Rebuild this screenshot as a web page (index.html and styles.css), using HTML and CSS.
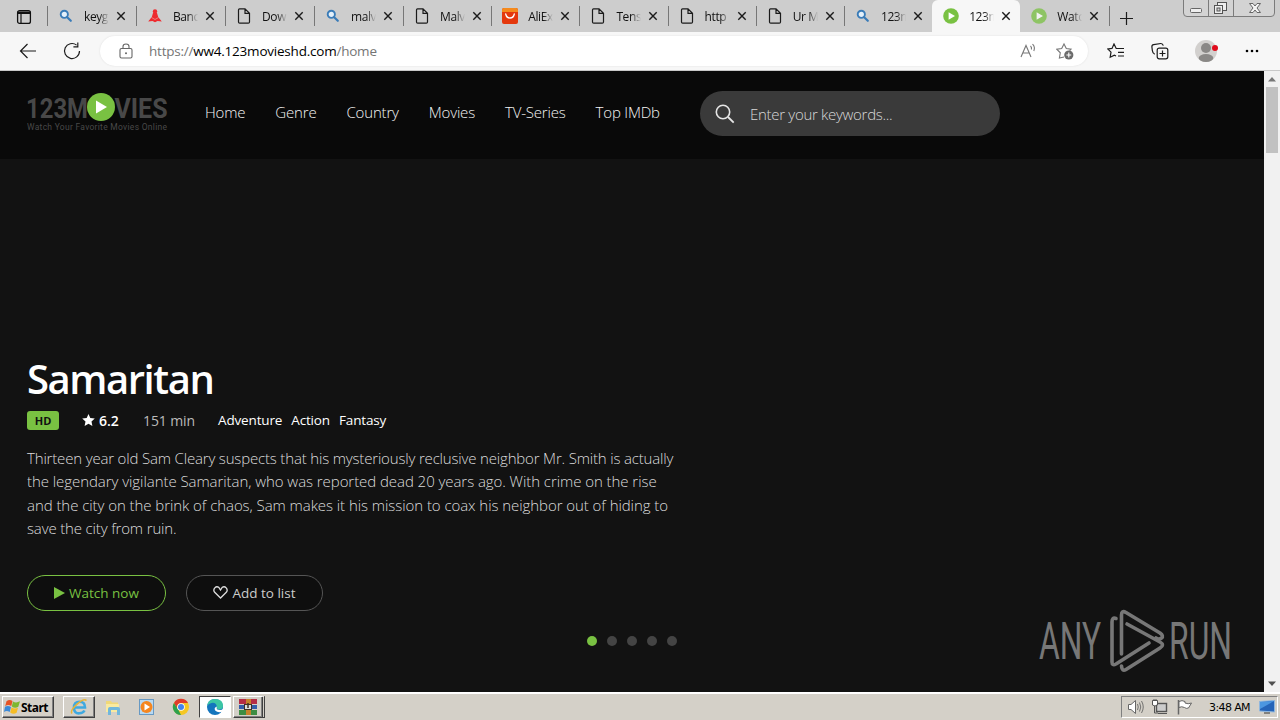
FILE: index.html
```html
<!DOCTYPE html>
<html lang="en">
<head>
    <meta charset="UTF-8">
    <meta name="viewport" content="width=device-width, initial-scale=1.0">
    <title>123movies</title>
    <link rel="stylesheet" href="styles.css">
</head>
<body>

<!-- shared icons -->
<svg width="0" height="0" class="defs">
    <symbol id="search" viewBox="0 0 16 16"><circle cx="6.3" cy="6.3" r="3.6" fill="#e4f0fa" stroke="#3a7cb8" stroke-width="1.9"/><path d="M9.2 9.2L12.8 12.8" stroke="#3a7cb8" stroke-width="2.2" stroke-linecap="round"/></symbol>
    <symbol id="page" viewBox="0 0 16 16"><path d="M3.5 .8H9L13.5 5.3V14Q13.5 15.2 12.3 15.2H3.7Q2.5 15.2 2.5 14V2Q2.5 .8 3.5 .8ZM9 .8V5.3H13.5" fill="none" stroke="#1b1b1b" stroke-width="1.2"/></symbol>
    <symbol id="play" viewBox="0 0 16 16"><circle cx="8" cy="8" r="7.8" fill="#79c142"/><path d="M5.6 4.2L12 8L5.6 11.8Z" fill="#fff"/></symbol>
    <symbol id="close" viewBox="0 0 10 10"><path d="M1.3 1.3L8.7 8.7M8.7 1.3L1.3 8.7" stroke="#1b1b1b" stroke-width="1.4"/></symbol>
</svg>

<div class="tabbar">
    <div class="tab-actions">
        <svg width="16" height="16" viewBox="0 0 16 16"><rect x="1.6" y="1.6" width="12.8" height="12.8" rx="2" fill="none" stroke="#111" stroke-width="1.3"/><path d="M1.5 2.5H14.5V5H1.5Z" fill="#111"/><path d="M5 4V14.5" stroke="#111" stroke-width="1.2"/></svg>
    </div>
    <div class="tabs">
        <div class="tab"><svg class="fav"><use href="#search"/></svg><span>keyg</span><svg class="x"><use href="#close"/></svg></div>
        <div class="tab"><svg class="fav" viewBox="0 0 16 16"><circle cx="8" cy="3.4" r="2.2" fill="#ee2a2e"/><path d="M6 5H10L11.2 9L14.8 13.6L10.5 13L8 14.2L5.5 13L1.2 13.6L4.8 9Z" fill="#ee2a2e"/><path d="M4.5 9.5L8 11.5L11.5 9.5" fill="none" stroke="#e9a0a0" stroke-width=".7"/></svg><span>Banc</span><svg class="x"><use href="#close"/></svg></div>
        <div class="tab"><svg class="fav"><use href="#page"/></svg><span>Dow</span><svg class="x"><use href="#close"/></svg></div>
        <div class="tab"><svg class="fav"><use href="#search"/></svg><span>malv</span><svg class="x"><use href="#close"/></svg></div>
        <div class="tab"><svg class="fav"><use href="#page"/></svg><span>Malv</span><svg class="x"><use href="#close"/></svg></div>
        <div class="tab"><svg class="fav" viewBox="0 0 16 16"><rect width="16" height="16" rx="2" fill="#e4380c"/><path d="M0 4V2Q0 0 2 0H14Q16 0 16 2V4Z" fill="#f58a1c"/><path d="M3.7 6Q4.5 10 8 10T12.3 6" fill="none" stroke="#fff" stroke-width="1.3" stroke-linecap="round"/></svg><span>AliEx</span><svg class="x"><use href="#close"/></svg></div>
        <div class="tab"><svg class="fav"><use href="#page"/></svg><span>Tens</span><svg class="x"><use href="#close"/></svg></div>
        <div class="tab"><svg class="fav"><use href="#page"/></svg><span>http</span><svg class="x"><use href="#close"/></svg></div>
        <div class="tab"><svg class="fav"><use href="#page"/></svg><span>Ur M</span><svg class="x"><use href="#close"/></svg></div>
        <div class="tab"><svg class="fav"><use href="#search"/></svg><span>123m</span><svg class="x"><use href="#close"/></svg></div>
        <div class="tab active"><svg class="fav"><use href="#play"/></svg><span>123m</span><svg class="x"><use href="#close"/></svg></div>
        <div class="tab after"><svg class="fav pale"><use href="#play"/></svg><span>Watc</span><svg class="x"><use href="#close"/></svg></div>
    </div>
    <div class="new-tab">
        <svg width="14" height="14" viewBox="0 0 14 14"><path d="M6.5 0V13M0 6.5H13" stroke="#1b1b1b" stroke-width="1.2"/></svg>
    </div>
    <div class="window-buttons">
        <svg width="92" height="17" viewBox="0 0 92 17"><path d="M.5 0V13Q.5 16.5 4 16.5H88Q91.5 16.5 91.5 13V0M25.5 0V16M50.5 0V16" fill="#d3d3d3" stroke="#7b7b7b"/><rect x="7.5" y="8.5" width="11" height="4" rx="1" fill="#eee" stroke="#666"/><rect x="34.5" y="2.5" width="9" height="8" fill="#eee" stroke="#555"/><rect x="31.5" y="5.5" width="8" height="8" fill="#eee" stroke="#555"/><rect x="34" y="8" width="3" height="3" fill="#d3d3d3" stroke="#555"/><path d="M66.5 3.5H70L72 6L74 3.5H77.5L74 8L77.5 12.5H74L72 10L70 12.5H66.5L70 8Z" fill="#f4f4f4" stroke="#666"/></svg>
    </div>
</div>

<div class="toolbar">
    <svg class="back" width="18" height="16" viewBox="0 0 18 16"><path d="M8.5 1L1.5 8L8.5 15M1.5 8H17" fill="none" stroke="#1b1b1b" stroke-width="1.2"/></svg>
    <svg class="reload" width="18" height="18" viewBox="0 0 18 18"><path d="M16.5 9A7.5 7.5 0 1 1 13.6 3.1M14.8 .5V4.9H10.4" fill="none" stroke="#1b1b1b" stroke-width="1.2"/></svg>
    <div class="address">
        <svg width="14" height="16" viewBox="0 0 14 16"><rect x="1" y="5.5" width="12" height="9.5" rx="1.5" fill="none" stroke="#666" stroke-width="1.1"/><path d="M4 5.5V3.5Q4 1 7 1T10 3.5V5.5" fill="none" stroke="#666" stroke-width="1.1"/><circle cx="7" cy="10.2" r="1" fill="#666"/></svg>
        <div class="url"><span class="scheme">https://</span><b>ww4.123movieshd.com</b><span class="path">/home</span></div>
        <svg class="read" width="17" height="16" viewBox="0 0 17 16"><path d="M1 14L6 2.5L11 14M2.8 10H9.2M10.5 3Q12 4.5 11.4 6.5M12.5 1.2Q15.5 4 13.8 8" fill="none" stroke="#777" stroke-width="1.1"/></svg>
        <svg width="18" height="18" viewBox="0 0 18 18"><path d="M8 15L3.4 16L4.3 10.8L.8 7.2L5.7 6.5L8 2L10.3 6.5L15 7.2L13.6 8.6" fill="none" stroke="#777" stroke-width="1.1"/><circle cx="12.8" cy="13" r="4.6" fill="#6b6b6b"/><path d="M12.8 10.6V15.4M10.4 13H15.2" stroke="#fff" stroke-width="1.1"/></svg>
    </div>
    <div class="tools">
        <svg width="18" height="16" viewBox="0 0 18 16"><path d="M9.6 5.5H17M11 9.3H17M11 13H17M10.8 5.5H9.2L7 1L5 5.4L.8 6L4 9.2L3.2 14.2L7.3 12.1L9 13" fill="none" stroke="#1b1b1b" stroke-width="1.2"/></svg>
        <svg width="18" height="18" viewBox="0 0 18 18"><rect x="6.2" y="6.2" width="10.6" height="10.6" rx="2" fill="none" stroke="#1b1b1b" stroke-width="1.2"/><path d="M11.5 8.5V14.5M8.5 11.5H14.5M3.8 12.2Q1.6 11.4 1.4 8.8L.9 5Q.7 3 2.6 2.7L9.8 1.5Q11.7 1.4 12.3 3.7" fill="none" stroke="#1b1b1b" stroke-width="1.2"/></svg>
        <svg width="24" height="22" viewBox="0 0 24 22"><circle cx="11" cy="11" r="11" fill="#d2d0ce"/><circle cx="11" cy="8" r="5" fill="#8a8886"/><ellipse cx="11" cy="18" rx="7.3" ry="4" fill="#8a8886"/><circle cx="20" cy="8" r="3" fill="#e00b1c"/></svg>
        <svg width="14" height="4" viewBox="0 0 14 4"><circle cx="2" cy="2" r="1.3"/><circle cx="7" cy="2" r="1.3"/><circle cx="12" cy="2" r="1.3"/></svg>
    </div>
</div>

<div class="viewport">
    <div class="site">
        <header class="header">
            <svg class="logo" width="142" height="42" viewBox="0 0 142 42">
                <text x="-1" y="25.5" textLength="62" lengthAdjust="spacingAndGlyphs" class="logo-name">123M</text>
                <text x="87.5" y="25.5" textLength="53" lengthAdjust="spacingAndGlyphs" class="logo-name">VIES</text>
                <circle cx="74" cy="15" r="14" fill="#79c142"/>
                <path d="M69 8.5L80 15L69 21.5Z" fill="#fff"/>
                <text x="0" y="38" textLength="140" class="logo-slogan">Watch Your Favorite Movies Online</text>
            </svg>
            <nav class="menu">
                <a>Home</a>
                <a>Genre</a>
                <a>Country</a>
                <a>Movies</a>
                <a>TV-Series</a>
                <a>Top IMDb</a>
            </nav>
            <div class="search">
                <svg width="20" height="20" viewBox="0 0 20 20"><circle cx="8" cy="8" r="6.7" fill="none" stroke="#e6e6e6" stroke-width="1.6"/><path d="M13 13L18.7 18.7" stroke="#e6e6e6" stroke-width="1.8"/></svg>
                <span>Enter your keywords...</span>
            </div>
        </header>

        <section class="hero">
            <h1>Samaritan</h1>
            <div class="meta">
                <span class="quality">HD</span>
                <span class="rating"><svg width="13" height="12" viewBox="0 0 13 12"><path d="M6.5 0L8.3 4L12.8 4.5L9.5 7.4L10.4 12L6.5 9.7L2.6 12L3.5 7.4L.2 4.5L4.7 4Z" fill="#fff"/></svg>6.2</span>
                <span class="time">151 min</span>
                <span class="genres"><a>Adventure</a><a>Action</a><a>Fantasy</a></span>
            </div>
            <p class="desc">
                <span class="l1">Thirteen year old Sam Cleary suspects that his mysteriously reclusive neighbor Mr. Smith is actually</span>
                <span class="l2">the legendary vigilante Samaritan, who was reported dead 20 years ago. With crime on the rise</span>
                <span class="l3">and the city on the brink of chaos, Sam makes it his mission to coax his neighbor out of hiding to</span>
                <span class="l4">save the city from ruin.</span>
            </p>
            <div class="buttons">
                <a class="btn watch"><svg width="11" height="12" viewBox="0 0 11 12"><path d="M0 0L11 6L0 12Z" fill="#79c142"/></svg>Watch now</a>
                <a class="btn add"><svg width="15" height="13" viewBox="0 0 15 13"><path d="M7.5 12L1.7 6.3C-.7 3.3 3 -.9 6 1.6L7.5 4L9 1.6C12 -.9 15.7 3.3 13.3 6.3Z" fill="none" stroke="#ddd" stroke-width="1.3"/></svg>Add to list</a>
            </div>
            <div class="dots"><i class="on"></i><i></i><i></i><i></i><i></i></div>
        </section>

        <svg class="watermark" width="194" height="64" viewBox="0 0 194 64">
            <text x="1" y="50" textLength="62" lengthAdjust="spacingAndGlyphs">ANY</text>
            <text x="131" y="50" textLength="63" lengthAdjust="spacingAndGlyphs">RUN</text>
            <g fill="none" stroke="#777" stroke-width="3.6" stroke-linejoin="round" stroke-linecap="round">
                <path d="M78 9.5Q74 8 74 13V53Q74 57 78 55L111 34"/>
                <path d="M83.500 45V6Q83.500 1 88 3.500L122 24Q126 27 123.500 29Q121 31 118 29"/>
                <path d="M83.500 57Q84 63 88 60.500L122 39Q127 36 122 33L89 15"/>
            </g>
        </svg>
    </div>
    <div class="scrollbar">
        <svg width="16" height="16" viewBox="0 0 16 16"><path d="M4 10.5L8 6L12 10.5Z" fill="#777"/></svg>
        <div class="thumb"></div>
        <svg width="16" height="16" viewBox="0 0 16 16"><path d="M4 5.5L8 10L12 5.5Z" fill="#505050"/></svg>
    </div>
</div>

<div class="taskbar">
    <div class="start">
        <svg width="16" height="16" viewBox="0 0 16 16"><path d="M2.500 2.300Q5.500 -.3 8.500 2L7.300 7Q4 5 1.200 7.200Z" fill="#e65325"/><path d="M9 2.500Q12 4.500 16 2.300L14.300 7.800Q11 10 7.800 7.500Z" fill="#7db72f"/><path d="M1 7.800Q4 6 7 8L5.700 13Q2.600 10.800 0 13Z" fill="#3c8ad8"/><path d="M7.600 8.300Q10.500 10.500 14 8.700L12.600 13.700Q9.500 16 6.200 13.500Z" fill="#f6bd25"/></svg>Start
    </div>
    <div class="task raised">
        <svg width="18" height="18" viewBox="0 0 18 18"><path d="M4.5 9.5H15Q15 3.7 9.5 3.7T4 9.7T9.5 15.3Q13 15.3 14.5 12.5" fill="none" stroke="#3fa9e0" stroke-width="2.6"/><path d="M2 15.5C-1 12 13 -1 16.5 2.5" fill="none" stroke="#e8b437" stroke-width="1.5"/></svg>
    </div>
    <div class="task">
        <svg width="18" height="18" viewBox="0 0 18 18"><path d="M2 3H7L8 4.5H14V8H2Z" fill="#f0d878"/><path d="M2 6H15V14H2Z" fill="#f9eaa0"/><path d="M4 17V11Q4 9 6 9H14Q16 9 16 11V17H13V12H7V17Z" fill="#71b7dc"/></svg>
    </div>
    <div class="task">
        <svg width="18" height="18" viewBox="0 0 18 18"><rect x="1.5" y="1.5" width="14" height="15" fill="#b8d9f2" stroke="#6799c3"/><circle cx="8.5" cy="9" r="6" fill="#f5861f"/><path d="M6.5 5.5L12 9L6.5 12.5Z" fill="#fff"/></svg>
    </div>
    <div class="task">
        <svg width="18" height="18" viewBox="0 0 18 18"><circle cx="9" cy="9" r="8" fill="#f5c722"/><path d="M2 5A8 8 0 0 1 16 5H9A4 4 0 0 0 5.5 11Z" fill="#df3b2c"/><path d="M1.9 5L6.5 12L9 17A8 8 0 0 1 1.9 5Z" fill="#2da04d"/><circle cx="9" cy="9" r="3.8" fill="#fff"/><circle cx="9" cy="9" r="3" fill="#4283ee"/></svg>
    </div>
    <div class="task pressed">
        <svg width="18" height="18" viewBox="0 0 18 18"><circle cx="9" cy="9" r="8" fill="#1475bd"/><path d="M1.200 8Q2 1 9 1Q17 1 17 8Q17 11.500 12.500 11.500Q10.500 11.300 11 9Q10 4 5.500 5Q2.500 5.700 1.200 8Z" fill="#3cc6a4"/><path d="M11 8.500Q9.500 12 14 12Q16 12 17 11V13.500Q12 15.500 9.200 12.500Q7.500 9.500 11 8.500Z" fill="#fff"/></svg>
    </div>
    <div class="task raised rar">
        <svg width="18" height="18" viewBox="0 0 18 18"><path d="M0 1H18V6H0Z" fill="#b52c45"/><path d="M0 7H18V11H0Z" fill="#345daa"/><path d="M0 12H18V17H0Z" fill="#3d8d43"/><path d="M7 1H12V17H7Z" fill="#c7822b"/><rect x="5.5" y="6.5" width="7" height="5" fill="#ddd" stroke="#403023"/><path d="M9 5V10" stroke="#403023" stroke-width="1.5"/></svg>
    </div>
    <div class="tray">
        <svg width="17" height="16" viewBox="0 0 17 16"><path d="M1.5 5.5H4L8.5 1.5V14.5L4 10.5H1.5Z" fill="#fff" stroke="#666"/><path d="M10.5 5Q12 8 10.5 11M12.5 3.5Q15 8 12.5 12.5M14.5 2Q18 8 14.5 14" fill="none" stroke="#666" stroke-width=".9"/></svg>
        <svg width="18" height="16" viewBox="0 0 18 16"><rect x="5.5" y="4.5" width="10" height="8" fill="#ccc" stroke="#555" stroke-width="1.4"/><path d="M7 14.5H16M3.5 7V14H7M1.5 1.5H6.5V6Q4 8 1.5 6ZM3 0V2M5 0V2" fill="none" stroke="#555"/><path d="M2 2H6V5.5Q4 7 2 5.5Z" fill="#fff"/></svg>
        <svg width="17" height="16" viewBox="0 0 17 16"><path d="M2.5 1V15.5" stroke="#666" stroke-width="1.5"/><path d="M3 2.5Q6 .8 9 2.5V4Q12 5.500 15.500 4L12.500 9Q10 10 8.500 8.500Q5.500 7 3 8.500Z" fill="#fff" stroke="#666"/></svg>
        <span class="clock">3:48 AM</span>
        <svg width="16" height="14" viewBox="0 0 16 14"><path d="M.5 1.5L15.5 .5V12L.5 11Z" fill="#2664b8" stroke="#8fb7df"/><path d="M1 2L15 1L1 9Z" fill="#4c96e0"/><path d="M5 13H11" stroke="#333"/></svg>
    </div>
</div>

</body>
</html>
```
FILE: styles.css
```css
body {
    margin: 0;
    width: 1280px;
    height: 720px;
    overflow: hidden;
    display: flex;
    flex-direction: column;
    font-family: "Open Sans", "Noto Sans", sans-serif;
}

svg {
    flex-shrink: 0;
}

.defs {
    position: absolute;
}

/* browser */
.tabbar {
    display: flex;
    height: 32px;
    background: #cdcdcd;
}

.tab-actions {
    width: 47px;
    box-sizing: border-box;
    padding: 8px 0 0 16px;
}

.tabs {
    display: grid;
    grid-template-columns: repeat(4, 89px) repeat(8, 88.2px);
    width: 1062px;
}

.tab {
    display: flex;
    align-items: center;
    padding-left: 11px;
    background: linear-gradient(#777, #777) 0 6px / 1px 20px no-repeat;
}

.tab span {
    width: 25px;
    margin-left: 10px;
    overflow: hidden;
    white-space: nowrap;
    font-size: 12px;
    letter-spacing: -0.4px;
    color: #111;
    -webkit-mask-image: linear-gradient(to right, #000 60%, transparent);
    mask-image: linear-gradient(to right, #000 60%, transparent);
}

.fav {
    width: 16px;
    height: 16px;
}

.pale {
    opacity: 0.75;
}

.x {
    width: 10px;
    height: 10px;
    margin-left: 7px;
}

.tab.active {
    background: #f7f7f7;
    border-radius: 6px 6px 0 0;
}

.tab.after {
    background: none;
}

.new-tab {
    width: 74px;
    box-sizing: border-box;
    padding: 9px 0 0 11px;
    background: linear-gradient(#777, #777) 0 6px / 1px 20px no-repeat;
}

.window-buttons {
    height: 17px;
}

.toolbar {
    display: flex;
    align-items: center;
    height: 39px;
    box-sizing: border-box;
    border-bottom: 1px solid #c8c8c8;
    background: #f7f7f7;
}

.back {
    margin-left: 19px;
}

.reload {
    margin-left: 26px;
}

.address {
    display: flex;
    align-items: center;
    width: 988px;
    height: 30px;
    box-sizing: border-box;
    margin-left: 19px;
    padding: 0 14px 0 19px;
    border-radius: 15px;
    background: #fff;
    box-shadow: 0 0 2px #ddd;
}

.url {
    flex: 1;
    margin-left: 16px;
    font-size: 13.5px;
    letter-spacing: -0.22px;
    color: #757575;
}

.url b {
    font-weight: normal;
    color: #000;
}

.read {
    margin-right: 19px;
}

.tools {
    display: flex;
    align-items: center;
    margin-left: 19px;
}

.tools svg + svg {
    margin-left: 26px;
}

/* site */
.viewport {
    display: flex;
    height: 621px;
}

.site {
    position: relative;
    width: 1264px;
    background: #121212;
}

.header {
    display: flex;
    height: 88px;
    background: #090909;
}

.logo {
    margin: 21px 0 0 27px;
}

.logo-name {
    font: bold 28px Roboto, sans-serif;
    fill: #484848;
}

.logo-slogan {
    font: 8.5px Roboto, sans-serif;
    fill: #484848;
}

.menu {
    display: flex;
    gap: 30px;
    width: 495px;
    box-sizing: border-box;
    margin-left: 36px;
    padding-top: 31px;
    white-space: nowrap;
    font-size: 15px;
    line-height: 20px;
    letter-spacing: -0.18px;
    font-weight: 300;
    color: #f4f4f4;
}

.search {
    display: flex;
    align-items: center;
    width: 300px;
    height: 45px;
    box-sizing: border-box;
    margin-top: 20px;
    padding: 1px 0 0 15px;
    border-radius: 23px;
    background: #3a3a3a;
    color: #d8d8d8;
    font-size: 15px;
    font-weight: 300;
    letter-spacing: -0.3px;
}

.search span {
    margin-left: 15px;
}

.hero {
    padding: 192px 0 0 27px;
    color: #fff;
}

.hero h1 {
    margin: 0;
    font-size: 40px;
    line-height: 56px;
    font-weight: 600;
    letter-spacing: -1.45px;
}

.meta {
    display: flex;
    align-items: center;
    height: 20px;
    margin-top: 3px;
    font-size: 14px;
    letter-spacing: -0.1px;
}

.quality {
    width: 32px;
    height: 19px;
    border-radius: 3px;
    background: #79c142;
    color: #111;
    font-size: 11px;
    line-height: 20px;
    font-weight: bold;
    text-align: center;
}

.rating {
    display: flex;
    align-items: center;
    gap: 4px;
    width: 61px;
    margin-left: 23px;
    font-weight: 600;
}

.time {
    width: 75px;
    color: #bbb;
}

.genres {
    display: flex;
    gap: 9px;
    font-size: 13.5px;
    letter-spacing: -0.15px;
}

.desc {
    margin: 17px 0 0;
    font-size: 15px;
    line-height: 23.4px;
    font-weight: 300;
    color: #dcdcdc;
}

.desc span {
    display: block;
    white-space: nowrap;
}

.l1 {
    letter-spacing: -0.17px;
}

.l2,
.l3 {
    letter-spacing: -0.06px;
}

.l4 {
    letter-spacing: -0.15px;
}

.buttons {
    display: flex;
    gap: 20px;
    margin-top: 34px;
}

.btn {
    display: flex;
    align-items: center;
    justify-content: center;
    gap: 4px;
    height: 36px;
    box-sizing: border-box;
    border: 1px solid #555;
    border-radius: 18px;
    background: #0e0e0e;
    color: #ccc;
    font-size: 13.5px;
    letter-spacing: 0;
}

.watch {
    width: 139px;
    border-color: #79c142;
    color: #79c142;
}

.add {
    width: 137px;
}

.dots {
    display: flex;
    gap: 10px;
    margin: 25px 0 0 560px;
}

.dots i {
    width: 10px;
    height: 10px;
    border-radius: 50%;
    background: #444;
}

.dots .on {
    background: #79c142;
}

.watermark {
    position: absolute;
    left: 1038px;
    top: 538px;
    font: 400 52px Roboto, sans-serif;
    fill: #777;
}

.scrollbar {
    display: flex;
    flex-direction: column;
    align-items: center;
    width: 16px;
    background: #f1f1f1;
}

.thumb {
    width: 12px;
    height: 66px;
    margin-bottom: auto;
    background: #c1c1c1;
}

/* taskbar */
.taskbar {
    display: flex;
    align-items: flex-start;
    height: 28px;
    box-sizing: border-box;
    padding: 4px 2px 0 2px;
    background: #d4d0c8;
    box-shadow: inset 0 2px #fff;
}

.start {
    display: flex;
    align-items: center;
    gap: 1px;
    width: 52px;
    height: 22px;
    box-sizing: border-box;
    padding-left: 1px;
    border: 1px solid;
    border-color: #fff #404040 #404040 #fff;
    box-shadow: inset -1px -1px #808080;
    font: bold 12px "Noto Sans", sans-serif;
    letter-spacing: -0.5px;
    margin-right: 9px;
}

.task {
    display: flex;
    align-items: center;
    justify-content: center;
    width: 32px;
    height: 22px;
    box-sizing: border-box;
    margin-right: 2px;
}

.raised {
    border: 1px solid;
    border-color: #fff #404040 #404040 #fff;
    box-shadow: inset -1px -1px #808080;
}

.pressed {
    border: 1px solid;
    border-color: #404040 #fff #fff #404040;
    background: #fff;
}

.rar {
    border-right: 3px double #404040;
}

.tray {
    display: flex;
    align-items: center;
    width: 157px;
    height: 22px;
    box-sizing: border-box;
    margin-left: auto;
    padding-left: 5px;
    border: 1px solid;
    border-color: #808080 #fff #fff #808080;
}

.tray svg + svg {
    margin-left: 7px;
}

.clock {
    width: 50px;
    margin-left: 16px;
    white-space: nowrap;
    font: 11px "DejaVu Sans", sans-serif;
    letter-spacing: -0.6px;
}
```
